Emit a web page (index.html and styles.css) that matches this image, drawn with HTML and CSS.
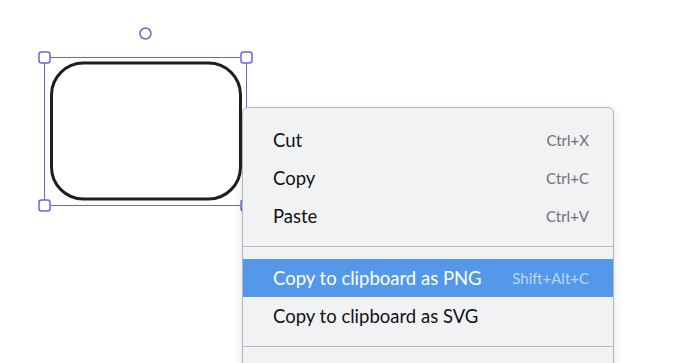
FILE: index.html
```html
<!DOCTYPE html>
<html>
<head>
<meta charset="utf-8">
<title>Canvas context menu</title>
<link rel="stylesheet" href="styles.css">
</head>
<body>
<div class="canvas">
	<svg class="scene" width="686" height="363" viewBox="0 0 686 363">
		<rect class="shape" x="51.5" y="63" width="189" height="136" rx="32" ry="32" />
		<g class="sel">
			<line x1="50" y1="57.5" x2="240" y2="57.5" />
			<line x1="50" y1="205.5" x2="240" y2="205.5" />
			<line x1="44.5" y1="63" x2="44.5" y2="200" />
			<line x1="246.5" y1="63" x2="246.5" y2="200" />
			<rect x="39" y="52" width="11" height="11" rx="2.5" />
			<rect x="241" y="52" width="11" height="11" rx="2.5" />
			<rect x="39" y="200" width="11" height="11" rx="2.5" />
			<rect x="241" y="200" width="11" height="11" rx="2.5" />
			<circle cx="145.5" cy="33.5" r="5.5" />
		</g>
	</svg>

	<ul class="ctx">
		<li class="item"><span class="label">Cut</span><span class="key">Ctrl+X</span></li>
		<li class="item"><span class="label">Copy</span><span class="key">Ctrl+C</span></li>
		<li class="item"><span class="label">Paste</span><span class="key">Ctrl+V</span></li>
		<li class="sep"></li>
		<li class="item on"><span class="label">Copy to clipboard as PNG</span><span class="key">Shift+Alt+C</span></li>
		<li class="item"><span class="label">Copy to clipboard as SVG</span><span class="key"></span></li>
		<li class="sep"></li>
		<li class="item"><span class="label">&nbsp;</span><span class="key"></span></li>
	</ul>
</div>
</body>
</html>
```

FILE: styles.css
```css
html, body { margin:0; padding:0; background:#fff; }
body { font-family:Lato, "Noto Sans", sans-serif; overflow:hidden; }

.canvas { position:relative; width:686px; height:363px; overflow:hidden; }
.scene { display:block; }

.shape { fill:#fff; stroke:#1e1e1e; stroke-width:3; }
.sel line { stroke:#6965db; stroke-width:1; }
.sel rect, .sel circle { fill:#fff; stroke:#6965db; stroke-width:1.5; }

.ctx {
	position:absolute; left:242px; top:107px;
	width:370px; margin:0; padding:13px 0 0;
	list-style:none;
	background:#f1f2f4;
	border:1px solid #b3b8c0;
	border-radius:6px;
	box-shadow:0 2px 8px rgba(0,0,0,.12);
}
.ctx .item {
	display:flex; justify-content:space-between; align-items:center;
	height:38px; padding:0 24px 0 30px;
	font-size:18.5px; line-height:36px; color:#111114;
}
.ctx .key { font-size:15px; color:#6e6f75; }
.ctx .on { background:#5499e9; color:#fff; }
.ctx .on .key { color:#bcd6f7; }
.ctx .sep { height:1px; margin:11px 0 12px; background:#b3b8c0; }
```
